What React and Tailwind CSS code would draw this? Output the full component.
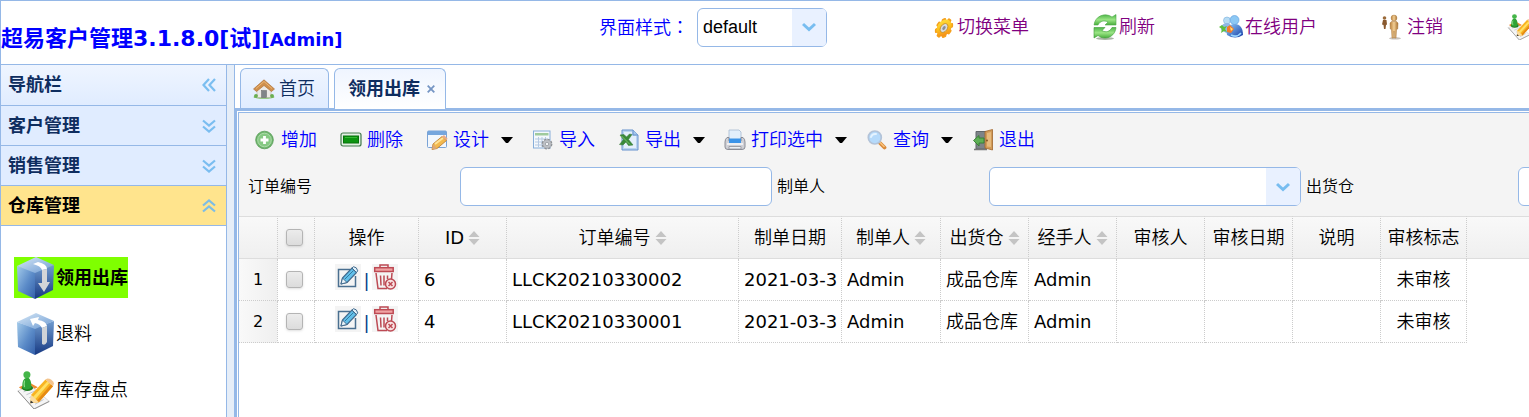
import React from "react";

const ICON = "block shrink-0";

function Gear() {
  const teeth = [0, 45, 90, 135, 180, 225, 270, 315];
  return (
    <svg className={ICON} width="22" height="24" viewBox="0 0 22 24" aria-hidden="true">
      <defs>
        <linearGradient id="gear" x1="0" y1="0" x2="1" y2="1">
          <stop offset="0" stopColor="#ffe545" />
          <stop offset=".5" stopColor="#fdc01c" />
          <stop offset="1" stopColor="#f0781a" />
        </linearGradient>
      </defs>
      <g transform="translate(11 13) rotate(35) scale(.82 1.12)">
        {teeth.map((a) => (
          <rect key={a} x="-2.4" y="-9.8" width="4.8" height="6" rx="1.4" fill="#f5a01c" transform={`rotate(${a})`} />
        ))}
        <circle r="8.2" fill="url(#gear)" />
        <ellipse rx="4" ry="4.4" fill="#d8dbe0" stroke="#c58a20" strokeWidth=".8" />
        <ellipse rx="1.7" ry="2" fill="#8b8f96" />
      </g>
    </svg>
  );
}

function Refresh() {
  return (
    <svg className={ICON} width="24" height="26" viewBox="0 0 24 26" aria-hidden="true">
      <defs>
        <linearGradient id="rf" x1="0" y1="0" x2="0" y2="1">
          <stop offset="0" stopColor="#4db548" />
          <stop offset=".5" stopColor="#9be585" />
          <stop offset="1" stopColor="#48ae3c" />
        </linearGradient>
      </defs>
      <ellipse cx="12" cy="24.500" rx="9" ry="1.400" fill="#a9b4a5" />
      <path d="M1 11C2 2 12-2 19 3L23 .5V11H12L15 8C11 6 7 7 5 11Z" fill="url(#rf)" stroke="#4faa49" strokeWidth=".6" />
      <path d="M23 13.500C22 23 12 27 5 21.500L1 24V13.500H12L9 16.500C13 19 17 17.500 19 13.500Z" fill="url(#rf)" stroke="#3c9a36" strokeWidth=".6" />
    </svg>
  );
}

function Users() {
  return (
    <svg className={ICON} width="24" height="24" viewBox="0 0 24 24" aria-hidden="true">
      <defs>
        <linearGradient id="us" x1="0" y1="0" x2="1" y2="1">
          <stop offset="0" stopColor="#8fcdf8" />
          <stop offset="1" stopColor="#1639a6" />
        </linearGradient>
      </defs>
      <circle cx="8" cy="5.500" r="3.500" fill="#b7dcf4" stroke="#78aede" strokeWidth=".6" />
      <path d="M2 15C1 10 5 8 8 8S13 10 13 15L9 19Z" fill="#8fb8e6" />
      <path d="M3 10L5 12L8 11L6 14L8 17L5 16L2 18L3 14L0 12Z" fill="#5fbf3e" />
      <circle cx="15.500" cy="5" r="4.500" fill="#8cc8f4" stroke="#5b9bdc" strokeWidth=".6" />
      <path d="M8 20C7 12 11 9 16 9S24 13 24 20Q16 25 8 20Z" fill="url(#us)" />
      <path d="M8 12L11 10L15 14L12 18L8 17Z" fill="#f57a28" />
      <path d="M11 12L14 14L12 16Z" fill="#ffe27a" />
      <path d="M12 20Q18 23 22 18" stroke="#9ad5ff" strokeWidth="1.500" fill="none" />
    </svg>
  );
}

function People() {
  return (
    <svg className={ICON} width="24" height="26" viewBox="0 0 24 26" aria-hidden="true">
      <defs>
        <linearGradient id="pp" x1="0" y1="0" x2="1" y2="0">
          <stop offset="0" stopColor="#b9803a" />
          <stop offset=".5" stopColor="#f3cf95" />
          <stop offset="1" stopColor="#a66f2e" />
        </linearGradient>
      </defs>
      <ellipse cx="14" cy="24.300" rx="6" ry="1.300" fill="#c8c2bb" />
      <circle cx="3.500" cy="4" r="1.800" fill="#9b6a3a" />
      <path d="M2 6H5.500L6 10.500L5 11L4.500 15H3L2.500 11L1 10.500Z" fill="#8a5a30" />
      <circle cx="13" cy="4" r="2.900" fill="url(#pp)" stroke="#a8763a" strokeWidth=".5" />
      <path d="M10.500 7.500H15.500L17 9L16.700 15L15.500 15.500L15 24H13.500L13 17L12.500 24H11L10.500 15.500L9.300 15L9 9Z" fill="url(#pp)" stroke="#a8763a" strokeWidth=".5" />
    </svg>
  );
}

function NotePen({ size = 40 }) {
  return (
    <svg className={ICON} width={size} height={size} viewBox="0 0 40 40" aria-hidden="true">
      <path d="M3 17L14 12L23 17L11 23Z" fill="#ee8a30" />
      <path d="M2 21L15 15L35 32L19 40Z" fill="#f5f5f5" stroke="#bbb" strokeWidth=".6" />
      <path d="M2 21L19 40L35 32" fill="none" stroke="#8a8a8a" strokeWidth="1" />
      <path d="M8 22L17 18M11 25L20 21M14 28L22 24M17 32L26 27M20 35L29 30" stroke="#b9bdc5" strokeWidth=".9" />
      <ellipse cx="12" cy="18" rx="6" ry="3" fill="#1f7f22" />
      <path d="M7 18C6 11 8 8 11 7S17 11 16 18Q11 21 7 18Z" fill="#2fa336" />
      <circle cx="11.500" cy="4" r="3.700" fill="#45b649" />
      <path d="M9 10Q8 14 9 17" stroke="#8ade88" strokeWidth="1.300" fill="none" />
      <path d="M16 25L31 9L39 16L24 33L15 34Z" fill="#f9b422" />
      <path d="M18 27L33 11L35 13L20 30Z" fill="#ffe064" />
      <path d="M24 33L39 16L37 14L22 31Z" fill="#e58a14" />
      <path d="M31 9L33 8Q38 8 40 13L39 16Z" fill="#f3c48e" />
      <path d="M16 25L24 33L15 34Z" fill="#fbdca0" />
      <path d="M15.500 31L18.500 33.500L15 34Z" fill="#333" />
    </svg>
  );
}

function Box({ up = false }) {
  return (
    <svg className={ICON} width="38" height="42" viewBox="0 0 38 42" aria-hidden="true">
      <defs>
        <linearGradient id="boxL" x1="0" y1="0" x2="1" y2="1">
          <stop offset="0" stopColor="#a4cbea" />
          <stop offset=".55" stopColor="#5b8bc8" />
          <stop offset="1" stopColor="#335fa9" />
        </linearGradient>
        <linearGradient id="boxR" x1="0" y1="0" x2="0" y2="1">
          <stop offset="0" stopColor="#6f9bcf" />
          <stop offset="1" stopColor="#173982" />
        </linearGradient>
        <linearGradient id="boxT" x1="0" y1="0" x2="1" y2="1">
          <stop offset="0" stopColor="#d8e9f7" />
          <stop offset="1" stopColor="#6c9ad2" />
        </linearGradient>
      </defs>
      <path d="M1 9L19 15V42L2 34Z" fill="url(#boxL)" />
      <path d="M19 15L38 8L37 33L19 42Z" fill="url(#boxR)" />
      <path d="M1 9L20 0L38 8L19 16Z" fill="url(#boxT)" />
      {up ? (
        <>
          <path d="M14 6L23 4L22 7Q30 8 31 13L26 15Q24 11 19 10L17 13Z" fill="#fff" />
          <path d="M26 15L31 13V29Q29 33 26 31Z" fill="#cfd3d8" />
        </>
      ) : (
        <>
          <path d="M17 7L22 5Q31 7 31 12L26 13Q25 9 17 7Z" fill="#fff" />
          <path d="M26 13L31 12V25L34 25L28 35L22 26L26 26Z" fill="#d3d5d8" />
        </>
      )}
    </svg>
  );
}

function House() {
  return (
    <svg className={ICON} width="22" height="20" viewBox="0 0 22 20" aria-hidden="true">
      <ellipse cx="11" cy="18" rx="10.500" ry="1.800" fill="#7fc05f" />
      <path d="M4 9L11 3L18 9V18.500H4Z" fill="#eceae6" stroke="#b9b4ab" strokeWidth=".6" />
      <path d="M11 .8L21.500 10L18.500 12.500L11 6.500L3.500 12.500L.5 10Z" fill="#cf8f4c" stroke="#a96a2e" strokeWidth=".6" />
      <path d="M3 9.500L11 2.500L19 9.500" stroke="#ecb877" strokeWidth="1" fill="none" />
      <rect x="8.500" y="11.500" width="5" height="7" fill="#808488" stroke="#666" strokeWidth=".5" />
      <circle cx="3" cy="16.800" r="1.900" fill="#6aae52" />
      <circle cx="19" cy="16.800" r="1.900" fill="#6aae52" />
    </svg>
  );
}

function Add() {
  return (
    <svg className={ICON} width="20" height="20" viewBox="0 0 20 20" aria-hidden="true">
      <circle cx="9.500" cy="10" r="8.800" fill="#6fb56d" stroke="#579c55" strokeWidth=".8" />
      <circle cx="9.500" cy="10" r="6.800" fill="#86c983" stroke="#b2deaf" strokeWidth=".9" />
      <path d="M9.500 6V14M5.500 10H13.500" stroke="#fff" strokeWidth="2.800" />
    </svg>
  );
}

function Remove() {
  return (
    <svg className={ICON} width="22" height="20" viewBox="0 0 22 20" aria-hidden="true">
      <rect x="1" y="3" width="20" height="13" rx="2" fill="#e3efe3" stroke="#417a4b" strokeWidth="1.200" />
      <rect x="3.500" y="6" width="15" height="7" fill="#0c9410" stroke="#06720a" strokeWidth="1" />
      <path d="M5 7.500H17" stroke="#35bb35" strokeWidth="1" />
    </svg>
  );
}

function Design() {
  return (
    <svg className={ICON} width="21" height="20" viewBox="0 0 21 20" aria-hidden="true">
      <rect x=".5" y="1" width="19" height="16.500" rx="1" fill="#f2f7fd" stroke="#7aa3d6" />
      <rect x="1" y="1" width="18" height="4" fill="#76a6dd" />
      <path d="M5 19.500L6 14L15 6.500L19.500 10.500L10 18.500Z" fill="#f2b94f" stroke="#b9772a" strokeWidth=".8" />
      <path d="M8 14L16 8" stroke="#ffe49a" strokeWidth="2" />
      <path d="M15 6.500L17 5L20.500 8.500L19.500 10.500Z" fill="#eaab88" />
      <path d="M5 19.500L6 14L10 18.500Z" fill="#dba878" />
    </svg>
  );
}

function Import() {
  return (
    <svg className={ICON} width="20" height="20" viewBox="0 0 20 20" aria-hidden="true">
      <rect x=".5" y="1" width="16.500" height="17" fill="#f4f8fc" stroke="#87aeda" />
      <rect x="2" y="3" width="13.500" height="2.500" fill="#9fca9d" />
      <path d="M2 9H15M2 12H15M2 15H12M5.500 7V17M9 7V17M12.500 7V17" stroke="#b5c9e2" strokeWidth="1" />
      <circle cx="14" cy="14" r="4.300" fill="#c3c6ca" stroke="#85898f" strokeWidth="2.200" strokeDasharray="2.100 1.270" />
      <circle cx="14" cy="14" r="4.200" fill="#bfc2c7" stroke="#a0a3a8" strokeWidth=".7" />
      <circle cx="14" cy="14" r="1.700" fill="#f1f3f5" stroke="#82868b" strokeWidth=".6" />
    </svg>
  );
}

function Excel() {
  return (
    <svg className={ICON} width="20" height="22" viewBox="0 0 20 22" aria-hidden="true">
      <path d="M3 1H14L19 6V21H3Z" fill="#b9d4f1" stroke="#6792cd" />
      <path d="M5 3H13V7H17V19H5Z" fill="#e3effb" />
      <path d="M14 1V6H19" fill="#a5c8ed" stroke="#6792cd" />
      <path d="M1 6L5 5.500L7.500 8L10.500 5L13 5.500L9.500 10.500L14 16L9.500 16.500L7 13L4 16L.5 15.500L4.500 10.500Z" fill="#388a3a" stroke="#3f7f42" strokeWidth=".6" />
      <path d="M2.500 7L11 15.500" stroke="#7bc36e" strokeWidth="1" />
    </svg>
  );
}

function Printer() {
  return (
    <svg className={ICON} width="22" height="22" viewBox="0 0 22 22" aria-hidden="true">
      <path d="M5 1H15L17 3V11H5Z" fill="#e3effb" stroke="#a6bad2" strokeWidth=".8" />
      <path d="M3 8.500Q1 10 1 13V18Q1 20.500 4 20.500H18Q21 20.500 21 18V13Q21 10 19 8.500H17V12H5V8.500Z" fill="#cfd0d6" stroke="#81838d" strokeWidth=".9" />
      <rect x="5" y="9.500" width="12" height="4.500" fill="#3c94e8" />
      <path d="M3 15H19" stroke="#fff" strokeWidth="1.300" />
      <path d="M5 17.500H17V20H5Z" fill="#eef1f5" stroke="#8e9097" strokeWidth=".8" />
    </svg>
  );
}

function Magnifier() {
  return (
    <svg className={ICON} width="20" height="20" viewBox="0 0 20 20" aria-hidden="true">
      <path d="M12 12L17.500 17.500" stroke="#d98a3a" strokeWidth="3.800" strokeLinecap="round" />
      <path d="M13 12.500L17 16.500" stroke="#f9c27c" strokeWidth="1.600" strokeLinecap="round" />
      <circle cx="7.800" cy="7.500" r="6.500" fill="#b5dafb" stroke="#b3c3d8" strokeWidth="1.700" />
      <path d="M4 7Q5 3.500 9 4" stroke="#e4f3ff" strokeWidth="2" fill="none" strokeLinecap="round" />
    </svg>
  );
}

function Door() {
  return (
    <svg className={ICON} width="20" height="22" viewBox="0 0 20 22" aria-hidden="true">
      <path d="M3 2.500H13V20H3Z" fill="#7d8488" stroke="#60666a" />
      <path d="M1 20.500H14" stroke="#777" strokeWidth="1.500" />
      <path d="M12 2.500L19.500 .5V21L12 19Z" fill="#d29b57" stroke="#a1662c" strokeWidth=".8" />
      <path d="M14 4L18 3V18L14 17.500Z" fill="#e6ba7c" />
      <circle cx="14" cy="11.500" r=".9" fill="#7c4c1e" />
      <path d="M.5 11.500L6 6.500V9H11V14H6V17Z" fill="#5eb055" stroke="#357d32" strokeWidth=".9" />
    </svg>
  );
}

function Chevrons({ d }) {
  return (
    <svg className={ICON} width="14" height="14" viewBox="0 0 14 14" fill="none" stroke="#6fb8ee" strokeOpacity=".9" strokeWidth="2.200" aria-hidden="true">
      <path d={d} />
    </svg>
  );
}
const LEFT = "M7 1L1.500 7L7 13M13 1L7.500 7L13 13";
const DOWN = "M1 1.500L7 6.500L13 1.500M1 7.500L7 12.500L13 7.500";
const UP = "M1 6.500L7 1.500L13 6.500M1 12.500L7 7.500L13 12.500";

function Caret() {
  return (
    <svg className="ml-3 -mr-1 block shrink-0" width="12" height="6" viewBox="0 0 12 6" aria-hidden="true">
      <path d="M0 0H12L7 6H5Z" fill="#000" />
    </svg>
  );
}

function Sort() {
  return (
    <svg className={ICON} width="12" height="14" viewBox="0 0 12 14" fill="#c4c4c4" aria-hidden="true">
      <path d="M6 0L11.500 6H.5ZM6 14L11.500 8H.5Z" />
    </svg>
  );
}

function EditIcon() {
  return (
    <svg className={ICON} width="26" height="26" viewBox="0 0 26 26" aria-hidden="true">
      <rect width="26" height="26" fill="#f4f4f4" />
      <path d="M15 5.500H3.500V22.500H20.500V12" fill="none" stroke="#4a6f90" strokeWidth="1.500" />
      <path d="M6 20L7.500 14L17 4L21.500 8.500L12 18.500Z" fill="#62c0ea" stroke="#416a8d" strokeWidth="1.100" strokeLinejoin="round" />
      <path d="M17 4L18.500 2.700Q22 3 22.700 6.800L21.500 8.500Z" fill="#dff0fa" stroke="#416a8d" strokeWidth="1" />
      <path d="M7.500 14L12 18.500L6 20Z" fill="#e8f2f8" stroke="#416a8d" strokeWidth="1" />
      <path d="M10 15L18.500 6.500" stroke="#35799f" strokeWidth="1" />
    </svg>
  );
}

function TrashIcon() {
  return (
    <svg className={ICON} width="26" height="26" viewBox="0 0 26 26" aria-hidden="true">
      <rect width="26" height="26" fill="#f4f4f4" />
      <g fill="none" stroke="#bd4a54" strokeWidth="1.500">
        <path d="M8 3V1H16V3" />
        <rect x="2.700" y="3.700" width="18.500" height="3.800" fill="#f0a3a3" />
        <path d="M4 9L6 24.500H15M20 9L19.500 15M8.500 11.500L9 21.500M12 11.500V21.500M15.500 11.500V15" />
        <circle cx="18.500" cy="20" r="5" fill="#f9e3e3" />
        <path d="M16.500 18L20.500 22M20.500 18L16.500 22" />
      </g>
    </svg>
  );
}

function Combo({ id, options, className }) {
  return (
    <span className={`relative block shrink-0 ${className}`}>
      <select
        id={id}
        className="block h-[39px] w-full appearance-none rounded-md border border-[#95b8e7] bg-white pl-[5px] font-['Liberation_Sans',sans-serif] text-lg leading-none text-black"
      >
        {options.map((o) => (
          <option key={o}>{o}</option>
        ))}
      </select>
      <span className="pointer-events-none absolute inset-y-px right-px flex w-[34px] items-center justify-center rounded-r bg-[#e9f1ff]">
        <svg width="14" height="10" viewBox="0 0 14 10" fill="none" stroke="#78bdf0" strokeWidth="3" aria-hidden="true">
          <path d="M1 2L7 7.500L13 2" />
        </svg>
      </span>
    </span>
  );
}

function TopLink({ icon, label, children }) {
  return (
    <a href="#" aria-label={label} className="flex shrink-0 items-center gap-0.5 text-lg leading-6 font-[350] text-[#800080]">
      {icon}
      {children && <span>{children}</span>}
    </a>
  );
}

function ToolButton({ icon, menu, children }) {
  return (
    <button type="button" className="flex shrink-0 items-center text-lg leading-6 font-[350] text-[#0000ff]">
      <span className="mr-1.5 flex w-5 justify-center">{icon}</span>
      {children}
      {menu && <Caret />}
    </button>
  );
}

function NavHeader({ children, d, active }) {
  return (
    <button
      type="button"
      aria-expanded={!!active}
      className={`flex h-10 w-full items-center justify-between border-b border-[#95b8e7] pr-2.5 pl-[7px] text-lg leading-6 font-bold ${
        active ? "bg-[#ffe48d] text-black" : "bg-[#e0ecff] text-[#0e2d5f]"
      }`}
    >
      {children}
      <Chevrons d={d} />
    </button>
  );
}

const CHECK =
  "block size-[17px] appearance-none rounded-[3px] border border-[#b4b4b4] bg-linear-to-b from-[#ececec] to-[#dcdcdc] shadow-sm";

const columns = [
  { name: "操作", width: "w-[104px]" },
  { name: "ID", width: "w-[88px]", sort: true, latin: true },
  { name: "订单编号", width: "w-[232px]", sort: true },
  { name: "制单日期", width: "w-[103px]" },
  { name: "制单人", width: "w-[99px]", sort: true },
  { name: "出货仓", width: "w-[88px]", sort: true },
  { name: "经手人", width: "w-[88px]", sort: true },
  { name: "审核人", width: "w-[88px]" },
  { name: "审核日期", width: "w-[88px]" },
  { name: "说明", width: "w-[88px]" },
  { name: "审核标志", width: "w-[86px]" },
];

const rows = [
  { id: "6", order: "LLCK20210330002", date: "2021-03-3", maker: "Admin", store: "成品仓库", handler: "Admin" },
  { id: "4", order: "LLCK20210330001", date: "2021-03-3", maker: "Admin", store: "成品仓库", handler: "Admin" },
];

const TH = "border-y border-r border-y-[#ddd] border-r-[#ccc] p-0 [border-right-style:dotted]";
const TD = "overflow-hidden border-r border-b border-dotted border-[#ccc] p-0";

export default function App() {
  return (
    <div className="flex min-h-screen flex-col overflow-hidden border-t border-l border-[#95b8e7] bg-white font-['DejaVu_Sans','Noto_Sans_CJK_SC',sans-serif] text-lg leading-6 text-black">
      <header className="flex h-16 shrink-0 border-b border-[#95b8e7]">
        <h1 className="flex w-[598px] shrink-0 items-baseline pt-[22px] font-bold whitespace-nowrap text-[#0000ff]">
          <span className="text-[22px] leading-8">超易客户管理3.1.8.0[试]</span>
          <span>[Admin]</span>
        </h1>
        <div className="flex h-[52px] shrink-0 items-center whitespace-nowrap">
          <label htmlFor="theme" className="w-[98px] font-[350] text-[#0000ff]">
            界面样式<span className="font-['Noto_Sans_CJK_TC',sans-serif]" lang="zh-Hant">：</span>
          </label>
          <Combo id="theme" options={["default"]} className="w-[130px]" />
          <nav className="ml-[106px] flex items-center gap-16">
            <TopLink icon={<Gear />}>切换菜单</TopLink>
            <TopLink icon={<Refresh />}>刷新</TopLink>
            <TopLink icon={<Users />}>在线用户</TopLink>
            <TopLink icon={<People />}>注销</TopLink>
            <TopLink icon={<NotePen size={26} />} label="库存盘点" />
          </nav>
        </div>
      </header>

      <div className="flex flex-1">
        <aside className="w-[226px] shrink-0 border-r border-[#95b8e7]">
          <div className="flex h-[41px] items-center justify-between border-b border-[#95b8e7] bg-linear-to-b from-[#eff5ff] to-[#e0ecff] pr-2.5 pl-[7px] font-bold text-[#0e2d5f]">
            导航栏
            <button type="button" aria-label="收起">
              <Chevrons d={LEFT} />
            </button>
          </div>
          <NavHeader d={DOWN}>客户管理</NavHeader>
          <NavHeader d={DOWN}>销售管理</NavHeader>
          <NavHeader d={UP} active>仓库管理</NavHeader>
          <ul className="flex flex-col items-start gap-[15px] pt-[31px] pl-[13px] whitespace-nowrap">
            <li className="bg-[#7fff00]">
              <a href="#" className="flex h-[41px] items-center gap-0.5 pl-0.5 font-bold">
                <Box />
                <span>领用出库</span>
              </a>
            </li>
            <li>
              <a href="#" className="flex h-[41px] items-center gap-0.5 pl-0.5 font-[350]">
                <Box up />
                <span>退料</span>
              </a>
            </li>
            <li>
              <a href="#" className="flex h-[41px] items-center gap-0.5 pl-0.5 font-[350]">
                <NotePen size={38} />
                <span>库存盘点</span>
              </a>
            </li>
          </ul>
        </aside>
        <div className="w-[7px] shrink-0 bg-[#e6eef8]" />

        <main className="flex min-w-0 flex-1 flex-col border-l border-[#95b8e7]">
          <div className="flex h-11 items-end gap-[5px] border-b border-[#95b8e7] pl-[5px]">
            <button
              type="button"
              className="flex h-10 w-[89px] items-center gap-1 rounded-t-md border border-b-0 border-[#95b8e7] bg-linear-to-b from-[#eff5ff] to-[#e0ecff] pl-3 font-[350] text-[#0e2d5f]"
            >
              <House />
              首页
            </button>
            <div className="-mb-px flex h-[41px] w-[112px] items-center gap-[7px] rounded-t-md border border-b-0 border-[#95b8e7] bg-linear-to-b from-[#eff5ff] to-white pl-[13px] font-bold text-[#0e2d5f]">
              <button type="button">领用出库</button>
              <button type="button" aria-label="关闭">
                <svg width="8" height="8" viewBox="0 0 8 8" stroke="#7595c4" strokeWidth="1.800" aria-hidden="true">
                  <path d="M.7.7L7.300 7.300M7.300.7L.7 7.300" />
                </svg>
              </button>
            </div>
          </div>

          <div className="flex flex-1 flex-col border-t-2 border-l-2 border-[#95b8e7] pt-px pl-px">
            <div className="flex-1 border-t border-l border-[#95b8e7]">
              <div className="overflow-hidden bg-[#f4f4f4]">
                <div role="toolbar" className="flex h-[54px] items-center gap-6 pl-4 whitespace-nowrap">
                  <ToolButton icon={<Add />}>增加</ToolButton>
                  <ToolButton icon={<Remove />}>删除</ToolButton>
                  <ToolButton icon={<Design />} menu>设计</ToolButton>
                  <ToolButton icon={<Import />}>导入</ToolButton>
                  <ToolButton icon={<Excel />} menu>导出</ToolButton>
                  <ToolButton icon={<Printer />} menu>打印选中</ToolButton>
                  <ToolButton icon={<Magnifier />} menu>查询</ToolButton>
                  <ToolButton icon={<Door />}>退出</ToolButton>
                </div>
                <form className="flex h-[49px] items-start gap-[5px] pl-[9px] text-base leading-[39px] font-[350] whitespace-nowrap">
                  <div className="flex shrink-0">
                    <label htmlFor="order" className="w-[212px]">订单编号</label>
                    <input id="order" className="h-[39px] w-[312px] rounded-md border border-[#95b8e7] bg-white px-1.5" />
                  </div>
                  <div className="flex shrink-0">
                    <label htmlFor="maker" className="w-[212px]">制单人</label>
                    <Combo id="maker" options={[""]} className="w-[312px]" />
                  </div>
                  <div className="flex shrink-0">
                    <label htmlFor="store" className="w-[212px]">出货仓</label>
                    <input id="store" className="h-[39px] w-[312px] rounded-md border border-[#95b8e7] bg-white px-1.5" />
                  </div>
                </form>
              </div>

              <table className="w-full table-fixed border-separate border-spacing-0 whitespace-nowrap">
                <thead>
                  <tr className="h-[43px] bg-linear-to-b from-[#f9f9f9] to-[#efefef]">
                    <th className={`w-[39px] ${TH}`} />
                    <th className={`w-[37px] ${TH}`}>
                      <input type="checkbox" aria-label="全选" className={`ml-2 ${CHECK}`} />
                    </th>
                    {columns.map((c) => (
                      <th key={c.name} className={`${c.width} ${TH} ${c.latin ? "font-normal" : "font-[350]"}`}>
                        <span className="flex items-center justify-center gap-1">
                          {c.name}
                          {c.sort && <Sort />}
                        </span>
                      </th>
                    ))}
                    <th className="border-y border-[#ddd] p-0" />
                  </tr>
                </thead>
                <tbody>
                  {rows.map((r, i) => (
                    <tr key={r.id} className="h-[42px]">
                      <td className={`${TD} bg-linear-to-r from-[#f9f9f9] to-[#efefef] text-center text-base`}>{i + 1}</td>
                      <td className={TD}>
                        <input type="checkbox" aria-label={r.order} className={`ml-2 ${CHECK}`} />
                      </td>
                      <td className={TD}>
                        <span className="flex items-center justify-center gap-0.5 pb-1.5 text-[#00438a]">
                          <button type="button" aria-label="编辑"><EditIcon /></button>
                          <span className="pt-2">|</span>
                          <button type="button" aria-label="删除"><TrashIcon /></button>
                        </span>
                      </td>
                      <td className={`${TD} pl-[5px]`}>{r.id}</td>
                      <td className={`${TD} pl-[5px]`}>{r.order}</td>
                      <td className={`${TD} pl-[5px]`}>{r.date}</td>
                      <td className={`${TD} pl-[5px]`}>{r.maker}</td>
                      <td className={`${TD} pl-[5px] font-[350]`}>{r.store}</td>
                      <td className={`${TD} pl-[5px]`}>{r.handler}</td>
                      <td className={TD} />
                      <td className={TD} />
                      <td className={TD} />
                      <td className={`${TD} text-center font-[350]`}>未审核</td>
                      <td className="p-0" />
                    </tr>
                  ))}
                </tbody>
              </table>
            </div>
          </div>
        </main>
      </div>
    </div>
  );
}
